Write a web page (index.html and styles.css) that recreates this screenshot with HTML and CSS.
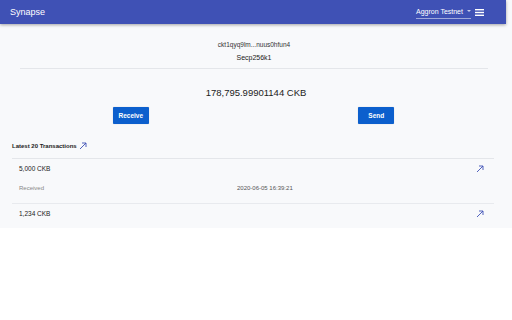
FILE: index.html
```html
<!DOCTYPE html>
<html lang="en">
<head>
    <meta charset="UTF-8">
    <title>Synapse</title>
    <link rel="stylesheet" href="styles.css">
</head>
<body>
    <div class="app">
        <header class="topbar">
            <span class="brand">Synapse</span>
            <div class="topbar-right">
                <div class="network">Aggron Testnet <span class="caret"></span></div>
                <svg class="menu" width="9" height="7" viewBox="0 0 9 7"><rect y="0" width="9" height="1.4" fill="#fff"/><rect y="2.8" width="9" height="1.4" fill="#fff"/><rect y="5.6" width="9" height="1.4" fill="#fff"/></svg>
            </div>
        </header>

        <main class="content">
            <section class="account">
                <div class="address">ckt1qyq9lm...nuus0hfun4</div>
                <div class="lock">Secp256k1</div>
            </section>

            <div class="balance">178,795.99901144 CKB</div>

            <div class="actions">
                <div class="action"><button class="btn">Receive</button></div>
                <div class="action"><button class="btn">Send</button></div>
            </div>

            <h4 class="tx-title">Latest 20 Transactions
                <svg width="8" height="8" viewBox="0 0 8 8"><path d="M1 7L7 1M3 1h4v4" stroke="#3f51b5" stroke-width="0.9" fill="none"/></svg>
            </h4>

            <div class="tx-list">
                <div class="tx">
                    <div class="tx-row">
                        <span>5,000 CKB</span>
                        <svg width="8" height="8" viewBox="0 0 8 8"><path d="M1 7L7 1M3 1h4v4" stroke="#3f51b5" stroke-width="0.9" fill="none"/></svg>
                    </div>
                    <div class="tx-meta">
                        <span class="tx-type">Received</span>
                        <span class="tx-date">2020-06-05 16:39:21</span>
                    </div>
                </div>
                <div class="tx">
                    <div class="tx-row">
                        <span>1,234 CKB</span>
                        <svg width="8" height="8" viewBox="0 0 8 8"><path d="M1 7L7 1M3 1h4v4" stroke="#3f51b5" stroke-width="0.9" fill="none"/></svg>
                    </div>
                </div>
            </div>
        </main>
    </div>
</body>
</html>
```

FILE: styles.css
```css
body {
    margin: 0;
    background: #ffffff;
    font-family: 'Liberation Sans', Arial, sans-serif;
    color: #222;
}

.app {
    background: #f8f9fb;
}

.topbar {
    width: 506px;
    height: 24px;
    background: #3f51b5;
    box-shadow: 0 1px 3px rgba(0, 0, 0, 0.35);
    display: flex;
    align-items: center;
    justify-content: space-between;
    box-sizing: border-box;
    padding: 0 22px 0 10px;
    color: #fff;
    position: relative;
}

.brand {
    font-size: 9px;
}

.topbar-right {
    display: flex;
    align-items: center;
    gap: 4px;
}

.network {
    font-size: 7px;
    padding: 2px 0 3px;
    border-bottom: 1px solid rgba(255, 255, 255, 0.5);
    display: flex;
    align-items: center;
    gap: 4px;
    width: 55px;
}

.caret {
    width: 0;
    height: 0;
    border-left: 2px solid transparent;
    border-right: 2px solid transparent;
    border-top: 2px solid rgba(255, 255, 255, 0.7);
}

.content {
    padding: 15px 0 5px;
}

.account {
    margin: 0 24px 0 20px;
    text-align: center;
    border-bottom: 1px solid #e4e6ea;
    padding-bottom: 4px;
}

.address {
    font-size: 6.5px;
    color: #333;
    line-height: 12px;
}

.lock {
    font-size: 7px;
    line-height: 13px;
}

.balance {
    text-align: center;
    font-size: 9.5px;
    margin-top: 18px;
    line-height: 12px;
}

.actions {
    display: grid;
    grid-template-columns: 1fr 1fr;
    padding: 0 13px 0 8px;
    margin-top: 8px;
}

.action {
    display: flex;
    justify-content: center;
}

.btn {
    background: #0c5fcd;
    color: #fff;
    border: none;
    border-radius: 1px;
    font-family: inherit;
    font-weight: bold;
    font-size: 6.5px;
    width: 36px;
    height: 17px;
    padding: 0;
    box-shadow: 0 0 1px rgba(0, 0, 0, 0.3);
}

.tx-title {
    margin: 18px 0 0 12px;
    font-size: 6px;
    display: flex;
    align-items: center;
    gap: 2px;
    padding-bottom: 8px;
}

.tx-list {
    margin: 0 18px 0 12px;
    border-top: 1px solid #e4e6ea;
}

.tx {
    padding: 0 10px 0 7px;
    border-bottom: 1px solid #e8eaee;
}

.tx:last-child {
    border-bottom: none;
}

.tx-row {
    display: flex;
    justify-content: space-between;
    align-items: center;
    font-size: 6.5px;
    height: 19px;
}

.tx-meta {
    display: grid;
    grid-template-columns: 218px 1fr;
    font-size: 6px;
    color: #888;
    height: 20px;
    padding-bottom: 5px;
    align-items: center;
}

.tx-date {
    color: #555;
}
```
